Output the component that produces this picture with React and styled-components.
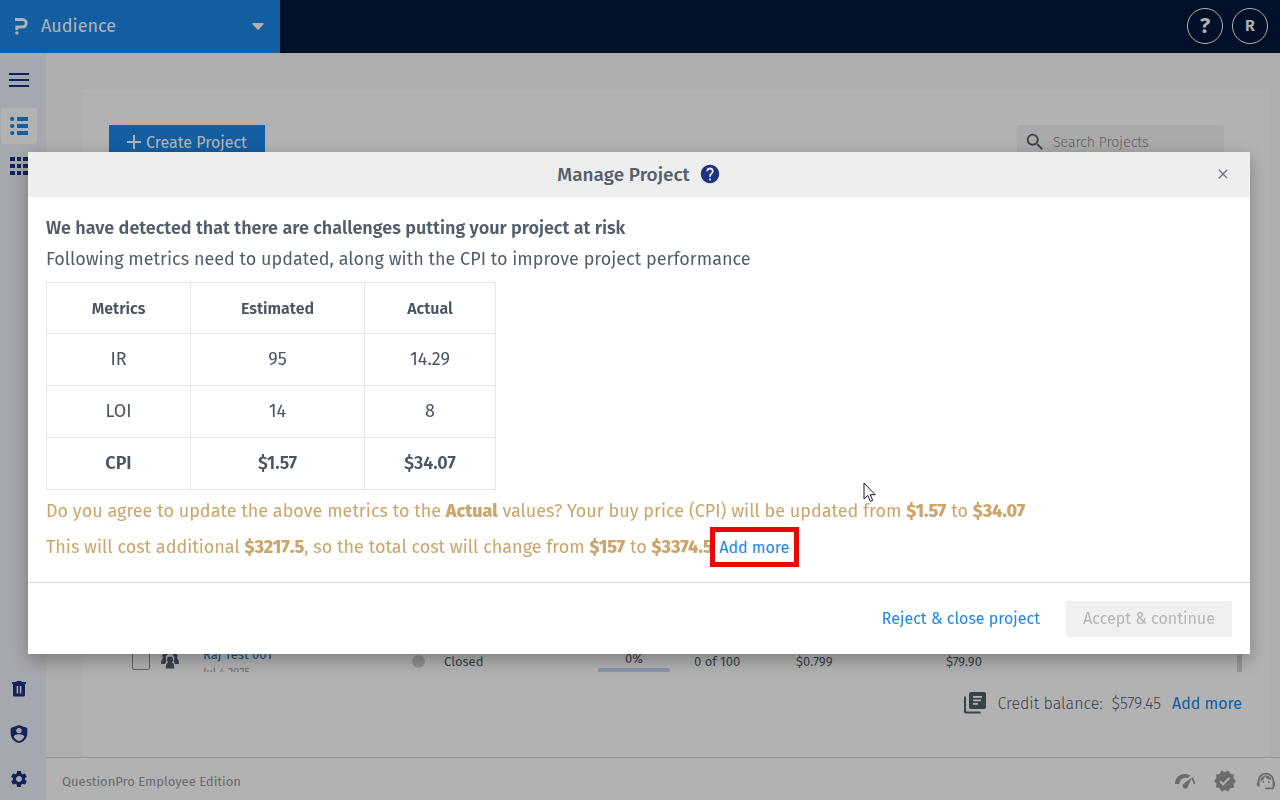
import { createGlobalStyle, styled } from "styled-components";
import {
  MdClose,
  MdHelp,
  MdSearch,
  MdSettings,
  MdSupportAgent,
  MdVerified,
} from "react-icons/md";

const GlobalStyle = createGlobalStyle`
  * {
    box-sizing: border-box;
    margin: 0;
    padding: 0;
  }
  body {
    font-family: "Fira Sans", "Noto Sans", sans-serif;
    font-size: 14px;
    color: #545e6b;
  }
  button, input {
    font: inherit;
    color: inherit;
    border: none;
    background: none;
  }
  button {
    cursor: pointer;
  }
  svg {
    flex-shrink: 0;
  }
  a {
    color: #1b87e6;
    text-decoration: none;
  }
`;

const Page = styled.div`
  height: 100vh;
  display: flex;
  flex-direction: column;
  overflow: hidden;
`;

/* top bar */
const TopBar = styled.header`
  height: 53px;
  flex-shrink: 0;
  display: flex;
  align-items: center;
  justify-content: space-between;
  background-color: #00183c;
`;
const ProductSwitch = styled.button`
  width: 280px;
  height: 100%;
  padding: 0 16px 1px 15px;
  display: flex;
  align-items: center;
  gap: 13px;
  background-color: #1b87e6;
  color: #fff;
  font-size: 18px;
`;
const ProductName = styled.span`
  flex: 1;
  text-align: left;
`;
const TopActions = styled.div`
  display: flex;
  gap: 9px;
  padding: 0 12px 1px 0;
`;
const RoundButton = styled.button`
  width: 36px;
  height: 36px;
  border: 1px solid #fff;
  border-radius: 50%;
  color: #fff;
  font-size: ${(props) => (props.$large ? "22px" : "16px")};
  line-height: 34px;
  font-weight: 600;
`;

const Body = styled.div`
  flex: 1;
  min-height: 0;
  display: flex;
`;

/* sidebar */
const Sidebar = styled.nav`
  width: 46px;
  flex-shrink: 0;
  display: flex;
  flex-direction: column;
  justify-content: space-between;
  padding: 9px 9px 3px 1px;
  background-color: #edf1f9;
`;
const SideGroup = styled.div`
  display: flex;
  flex-direction: column;
  gap: ${(props) => props.$gap};
`;
const SideButton = styled.button`
  width: 36px;
  height: 36px;
  display: flex;
  align-items: center;
  justify-content: center;
  border-radius: 3px;
  color: ${(props) => (props.$active ? "#1b87e6" : "#1b3380")};
  background-color: ${(props) => (props.$active ? "#fff" : "transparent")};
`;
const MenuButton = styled(SideButton)`
  margin-bottom: 6px;
`;

/* project list */
const Main = styled.main`
  flex: 1;
  min-width: 0;
  display: flex;
  flex-direction: column;
  background-color: #f9f9f9;
`;
const Card = styled.section`
  flex: 1;
  min-height: 0;
  display: flex;
  flex-direction: column;
  margin: 36px 11px 0 36px;
  padding: 36px 27px;
  background-color: #fff;
`;
const Toolbar = styled.div`
  display: flex;
  justify-content: space-between;
  padding-right: 18px;
`;
const CreateButton = styled.button`
  height: 36px;
  width: 156px;
  display: flex;
  align-items: center;
  justify-content: center;
  gap: 5px;
  padding-bottom: 2px;
  background-color: #1b87e6;
  color: #fff;
  font-size: 16px;
`;
const SearchBox = styled.label`
  width: 207px;
  height: 36px;
  display: flex;
  align-items: center;
  gap: 7px;
  padding: 0 0 2px 7px;
  border-radius: 3px;
  background-color: #f3f3f3;
  color: #545e6b;
`;
const SearchInput = styled.input`
  width: 100%;
  min-width: 0;
  height: 34px;
  font-size: 14px;
  font-weight: 300;
  outline: none;
  &::placeholder {
    color: #8c8c8c;
    opacity: 1;
  }
`;
const List = styled.div`
  flex: 1;
  min-height: 0;
  display: flex;
  justify-content: space-between;
  align-items: flex-end;
  overflow: hidden;
`;
const ListThumb = styled.div`
  width: 5px;
  height: 100%;
  background-color: #d8d8d8;
`;
const Row = styled.div`
  flex: 1;
  height: 54px;
  margin-bottom: -16px;
  padding-left: 23px;
  display: grid;
  grid-template-columns: 29px 42px 209px 32px 154px 96px 102px 150px 1fr;
  align-items: center;
  font-size: 13px;
`;
const RowCheck = styled.input`
  appearance: none;
  width: 18px;
  height: 18px;
  border: 1px solid #8a8f96;
  border-radius: 2px;
`;
const NameCell = styled.div`
  display: flex;
  flex-direction: column;
  padding-top: 3px;
`;
const ProjectLink = styled.a`
  line-height: 20px;
  color: #1b6fc0;
`;
const ProjectDate = styled.span`
  font-size: 11px;
  line-height: 16px;
  color: #9b9b9b;
`;
const StatusDot = styled.span`
  width: 13px;
  height: 13px;
  border-radius: 50%;
  background-color: #d0d0d0;
`;
const Progress = styled.div`
  width: 72px;
  line-height: 18px;
  text-align: center;
`;
const ProgressTrack = styled.div`
  height: 5px;
  border-radius: 3px;
  background-color: #c3d7f3;
`;
const Credit = styled.div`
  height: 36px;
  margin-top: 13px;
  flex-shrink: 0;
  display: flex;
  align-items: center;
  justify-content: flex-end;
  font-size: 16px;
  font-weight: 300;
`;
const CreditText = styled.span`
  margin-left: 11px;
`;
const CreditValue = styled.span`
  margin: 0 11px 0 9px;
`;
const CreditLink = styled.a`
  font-weight: 400;
`;
const PageFooter = styled.footer`
  height: 43px;
  flex-shrink: 0;
  display: flex;
  align-items: center;
  justify-content: space-between;
  padding: 4px 3px 0 16px;
  border-top: 1px solid #d5d5d5;
  background-color: #fff;
  color: #9b9b9b;
  font-size: 13px;
`;
const FooterIcons = styled.div`
  display: flex;
  align-items: center;
  gap: 18px;
`;

/* modal */
const Overlay = styled.div`
  position: fixed;
  inset: 0;
  padding: 152px 30px 0 28px;
  background-color: rgba(0, 0, 0, 0.3);
`;
const Modal = styled.div`
  position: relative;
  background-color: #fff;
  box-shadow: 0 6px 18px rgba(0, 0, 0, 0.3);
`;
const ModalHeader = styled.div`
  height: 45px;
  display: grid;
  grid-template-columns: 1fr auto 1fr;
  align-items: center;
  padding: 0 19px 1px;
  background-color: #eee;
`;
const ModalTitle = styled.h1`
  grid-column: 2;
  display: flex;
  align-items: center;
  gap: 9px;
  font-size: 19px;
  font-weight: 500;
`;
const CloseButton = styled.button`
  justify-self: end;
  display: flex;
  color: #6f7681;
`;
const ModalBody = styled.div`
  padding: 16px 18px 17px;
`;
const Lead = styled.p`
  font-size: 18px;
  line-height: 31px;
  font-weight: ${(props) => (props.$bold ? 600 : 400)};
`;
const MetricsTable = styled.table`
  width: 450px;
  margin: 7px 0 3px;
  border-collapse: collapse;
  table-layout: fixed;
  color: #4a5462;
  text-align: center;
`;
const Th = styled.th`
  width: ${(props) => props.$width};
  height: 51px;
  border: 1px solid #e4e5e8;
  font-size: 16px;
  font-weight: 600;
`;
const Td = styled.td`
  height: 52px;
  padding-bottom: 2px;
  border: 1px solid #e4e5e8;
  font-size: 18px;
  font-weight: ${(props) => (props.$bold ? 600 : 400)};
`;
const Notice = styled.p`
  height: 36px;
  display: flex;
  align-items: center;
  white-space: pre;
  font-size: 18px;
  color: #cba56a;
  b {
    font-weight: 800;
  }
`;
const Highlight = styled.span`
  display: flex;
  align-items: center;
  justify-content: center;
  width: 89px;
  height: 40px;
  margin-left: -3px;
  border: 5px solid #e80808;
  background-color: #fff;
  font-size: 16px;
  z-index: 1;
`;
const ModalFooter = styled.div`
  display: flex;
  align-items: center;
  justify-content: flex-end;
  gap: 26px;
  padding: 18px 18px 17px;
  border-top: 1px solid #d8d8d8;
  font-size: 16px;
`;
const RejectButton = styled.button`
  height: 36px;
  padding-bottom: 2px;
  color: #1b87e6;
`;
const AcceptButton = styled.button`
  width: 166px;
  height: 36px;
  padding-bottom: 2px;
  border-radius: 2px;
  background-color: #f0f0f0;
  color: #b5b5b5;
`;
const Pointer = styled.svg`
  position: absolute;
  left: 835px;
  top: 330px;
`;

const metrics = [
  { name: "IR", estimated: "95", actual: "14.29" },
  { name: "LOI", estimated: "14", actual: "8" },
  { name: "CPI", estimated: "$1.57", actual: "$34.07", bold: true },
];

function Logo() {
  return (
    <svg width="13" height="17" viewBox="0 0 13 17" fill="none">
      <path
        d="M0 1.5h7.5a3.6 3.6 0 0 1 0 7.5H1.8v3"
        stroke="currentColor"
        strokeWidth="2.8"
      />
      <circle cx="1.9" cy="14.9" r="1.7" fill="currentColor" />
    </svg>
  );
}

function CaretIcon() {
  return (
    <svg width="12" height="7" viewBox="0 0 12 7" fill="currentColor">
      <path d="M1 0h10a.7.7 0 0 1 .5 1.200L6.700 6.600a1 1 0 0 1-1.400 0L.5 1.200A.7.7 0 0 1 1 0z" />
    </svg>
  );
}

function PlusIcon() {
  return (
    <svg width="14" height="14" viewBox="0 0 14 14" fill="currentColor">
      <path d="M6 0h2v6h6v2H8v6H6V8H0V6h6z" />
    </svg>
  );
}

function MenuIcon() {
  return (
    <svg width="20" height="14" viewBox="0 0 20 14" fill="currentColor">
      <path d="M0 0h20v2H0zM0 6h20v2H0zM0 12h20v2H0z" />
    </svg>
  );
}

function ListIcon() {
  return (
    <svg width="18" height="18" viewBox="0 0 18 18" fill="currentColor">
      <circle cx="2.2" cy="2" r="2.1" />
      <circle cx="2.2" cy="9" r="2.1" />
      <circle cx="2.2" cy="16" r="2.1" />
      <path d="M7 0h11v4H7zM7 7h11v4H7zM7 14h11v4H7z" />
    </svg>
  );
}

function GridIcon() {
  return (
    <svg width="18" height="18" viewBox="0 0 18 18" fill="currentColor">
      <path d="M0 0h5v4H0zM7 0h4v4H7zM13 0h5v4h-5zM0 7h5v4H0zM7 7h4v4H7zM13 7h5v4h-5zM0 14h5v4H0zM7 14h4v4H7zM13 14h5v4h-5z" />
    </svg>
  );
}

function TrashIcon() {
  return (
    <svg width="14" height="16" viewBox="0 0 14 16" fill="currentColor">
      <path
        fillRule="evenodd"
        d="M0 1h4l1-1h4l1 1h4v2h-1v11a1.5 1.5 0 0 1-1.5 1.5h-9A1.5 1.5 0 0 1 1 14V3H0zM4.6 5v7.5h1.6V5zM7.8 5v7.5h1.6V5z"
      />
    </svg>
  );
}

function ShieldIcon() {
  return (
    <svg width="18" height="18" viewBox="0 0 18 18">
      <path
        fill="currentColor"
        d="M9 0l8.3 3v5.4c0 4.5-3.4 8.2-8.3 9.6C4.100 16.600.7 12.900.7 8.400V3z"
      />
      <circle cx="9" cy="5.600" r="2.700" fill="#edf1f9" />
      <path
        fill="#edf1f9"
        d="M3.600 11.400C4.800 9.600 7 9.200 9 9.200s4.200.4 5.400 2.200C13.200 13.900 11.400 15.300 9 16.200c-2.400-.9-4.200-2.300-5.400-4.800z"
      />
    </svg>
  );
}

function PeopleIcon() {
  return (
    <svg width="18" height="16" viewBox="0 0 18 16" fill="#545e6b">
      <path d="M4.500 0a3 3 0 0 1 2.400 1.200A5 5 0 0 0 5.500 8L4 11H0c0-3 .6-5 2.200-6A3 3 0 0 1 4.500 0zM13.500 0a3 3 0 0 0-2.400 1.200A5 5 0 0 1 12.500 8l1.500 3h4c0-3-.6-5-2.200-6A3 3 0 0 0 13.500 0z" />
      <circle cx="9" cy="6.500" r="3" />
      <path d="M4.800 15.500c0-3.500.7-5.500 2.400-6.500h3.600c1.700 1 2.400 3 2.400 6.500z" />
    </svg>
  );
}

function CreditIcon() {
  return (
    <svg width="22" height="22" viewBox="0 0 22 22" fill="#545e6b">
      <path d="M0 4.500h2v15h14.500v2H2a2 2 0 0 1-2-2z" />
      <path
        fillRule="evenodd"
        d="M7 0h13a2 2 0 0 1 2 2v13a2 2 0 0 1-2 2H7a2 2 0 0 1-2-2V2a2 2 0 0 1 2-2zM9 4v1.800h9V4zM9 7.500v1.800h8V7.500zM9 11v1.800h5V11z"
      />
    </svg>
  );
}

function GaugeIcon() {
  return (
    <svg width="20" height="16" viewBox="0 0 20 16" fill="currentColor">
      <path d="M0 11C.2 4.500 4.500 1 10 1c2 0 4 .5 5.600 1.600L12.800 5C9 3.800 4.800 6 4.300 11zM17 3.800c1.800 1.800 2.800 4 3 7.200h-1.600c0-1.800-.7-3.200-1.800-4.400z" />
      <path d="M17 4.500l-4.200 9.400a2.700 2.700 0 1 1-4.500-2.800z" />
    </svg>
  );
}

function ManageProjectModal() {
  return (
    <Overlay>
      <Modal role="dialog" aria-labelledby="modal-title">
        <ModalHeader>
          <ModalTitle id="modal-title">
            Manage Project <MdHelp size={22} color="#1b3380" />
          </ModalTitle>
          <CloseButton aria-label="Close">
            <MdClose size={16} stroke="currentColor" />
          </CloseButton>
        </ModalHeader>
        <ModalBody>
          <Lead $bold>
            We have detected that there are challenges putting your project at
            risk
          </Lead>
          <Lead>
            Following metrics need to updated, along with the CPI to improve
            project performance
          </Lead>
          <MetricsTable>
            <thead>
              <tr>
                <Th $width="144px">Metrics</Th>
                <Th $width="174px">Estimated</Th>
                <Th $width="131px">Actual</Th>
              </tr>
            </thead>
            <tbody>
              {metrics.map((m) => (
                <tr key={m.name}>
                  <Td $bold={m.bold}>{m.name}</Td>
                  <Td $bold={m.bold}>{m.estimated}</Td>
                  <Td $bold={m.bold}>{m.actual}</Td>
                </tr>
              ))}
            </tbody>
          </MetricsTable>
          <Notice>
            Do you agree to update the above metrics to the <b>Actual</b>
            {" values? Your buy price (CPI) will be updated from "}
            <b>$1.57</b> to <b>$34.07</b>
          </Notice>
          <Notice>
            This will cost additional <b>$3217.5</b>
            {", so the total cost will change from "}
            <b>$157</b> to <b>$3374.5</b>
            <Highlight>
              <a href="#credit">Add more</a>
            </Highlight>
          </Notice>
        </ModalBody>
        <ModalFooter>
          <RejectButton>Reject &amp; close project</RejectButton>
          <AcceptButton disabled>Accept &amp; continue</AcceptButton>
        </ModalFooter>
        <Pointer width="14" height="21" viewBox="0 0 14 21">
          <path
            d="M1 1v16l3.800-3.500 2.500 5.800 2.400-1-2.500-5.600h5z"
            fill="#fff"
            stroke="#111827"
          />
        </Pointer>
      </Modal>
    </Overlay>
  );
}

function App() {
  return (
    <Page>
      <GlobalStyle />
      <TopBar>
        <ProductSwitch>
          <Logo />
          <ProductName>Audience</ProductName>
          <CaretIcon />
        </ProductSwitch>
        <TopActions>
          <RoundButton $large>?</RoundButton>
          <RoundButton>R</RoundButton>
        </TopActions>
      </TopBar>
      <Body>
        <Sidebar>
          <SideGroup $gap="4px">
            <MenuButton aria-label="Menu">
              <MenuIcon />
            </MenuButton>
            <SideButton $active aria-label="Projects">
              <ListIcon />
            </SideButton>
            <SideButton aria-label="Apps">
              <GridIcon />
            </SideButton>
          </SideGroup>
          <SideGroup $gap="9px">
            <SideButton aria-label="Trash">
              <TrashIcon />
            </SideButton>
            <SideButton aria-label="Privacy">
              <ShieldIcon />
            </SideButton>
            <SideButton aria-label="Settings">
              <MdSettings size={20} />
            </SideButton>
          </SideGroup>
        </Sidebar>
        <Main>
          <Card>
            <Toolbar>
              <CreateButton>
                <PlusIcon />
                Create Project
              </CreateButton>
              <SearchBox>
                <MdSearch size={22} stroke="currentColor" />
                <SearchInput
                  placeholder="Search Projects"
                  aria-label="Search Projects"
                />
              </SearchBox>
            </Toolbar>
            <List>
              <Row>
                <RowCheck type="checkbox" aria-label="Select Raj Test 001" />
                <PeopleIcon />
                <NameCell>
                  <ProjectLink href="#project">Raj Test 001</ProjectLink>
                  <ProjectDate>Jul 4 2025</ProjectDate>
                </NameCell>
                <StatusDot />
                <span>Closed</span>
                <Progress>
                  0%
                  <ProgressTrack />
                </Progress>
                <span>0 of 100</span>
                <span>$0.799</span>
                <span>$79.90</span>
              </Row>
              <ListThumb />
            </List>
            <Credit>
              <CreditIcon />
              <CreditText>Credit balance:</CreditText>
              <CreditValue>$579.45</CreditValue>
              <CreditLink href="#credit">Add more</CreditLink>
            </Credit>
          </Card>
          <PageFooter>
            <span>QuestionPro Employee Edition</span>
            <FooterIcons>
              <GaugeIcon />
              <MdVerified size={24} />
              <MdSupportAgent size={22} />
            </FooterIcons>
          </PageFooter>
        </Main>
      </Body>
      <ManageProjectModal />
    </Page>
  );
}

export default App;
